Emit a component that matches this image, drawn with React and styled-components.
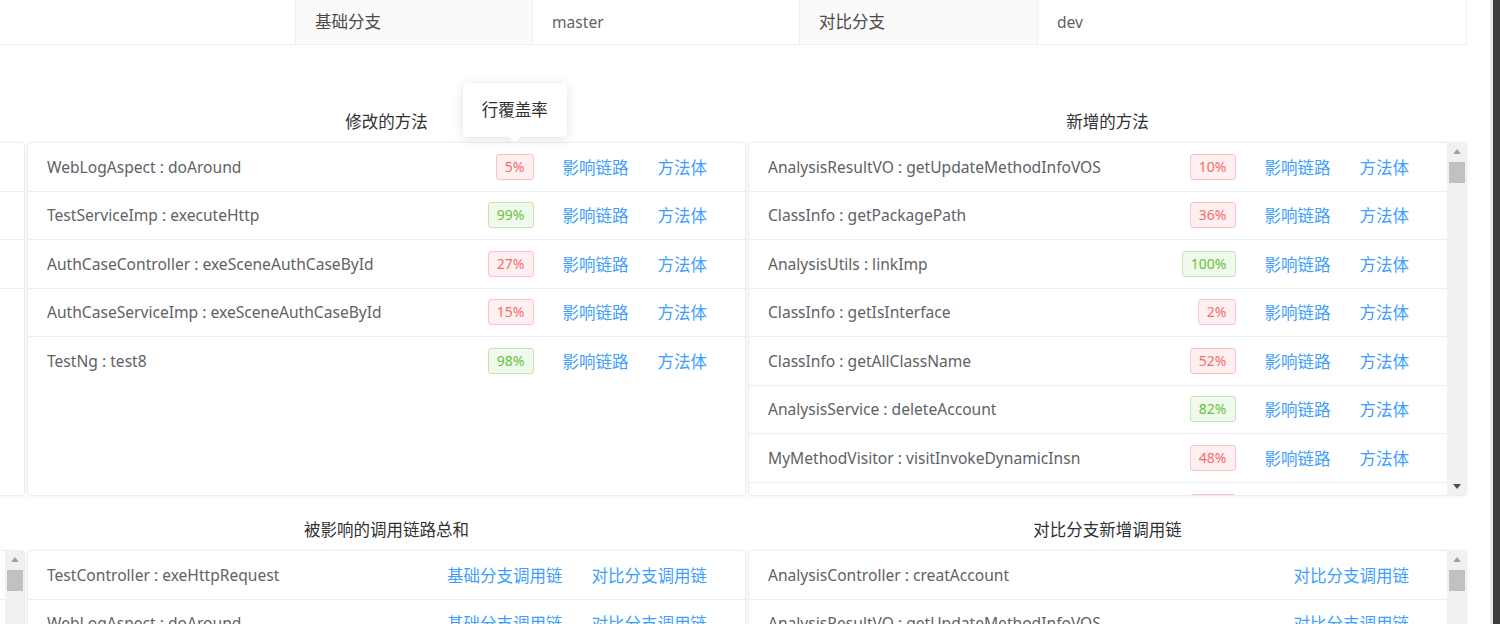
import React from 'react';
import styled, { createGlobalStyle } from 'styled-components';

const GlobalStyle = createGlobalStyle`
  html, body {
    margin: 0;
    padding: 0;
    height: 100%;
    overflow: hidden;
    background: #fff;
  }
  body {
    font-family: "Noto Sans", "Noto Sans CJK SC", sans-serif;
  }
`;

const Frame = styled.div`
  display: flex;
  height: 624px;
`;

const Viewport = styled.div`
  flex: 1;
  min-width: 0;
  overflow: hidden;
`;

const EdgeBar = styled.div`
  width: 7px;
  border-left: 3px solid #e6e6e6;
  background: #3b3b3b;
`;

/* the page is scrolled sideways: the first column lies left of the window */
const Page = styled.div`
  width: 2161px;
  margin-left: -694px;
`;

const DescTable = styled.div`
  display: grid;
  grid-template-columns: 237px 752px 237px 267px 238px 1fr;
  border-bottom: 1px solid #ebeef5;
  border-right: 1px solid #ebeef5;
`;

const DescCell = styled.div`
  box-sizing: border-box;
  height: 44px;
  line-height: 44px;
  padding: 0 19px;
  font-size: ${p => (p.$label ? '16.5px' : '15.6px')};
  color: ${p => (p.$label ? '#4a4a4a' : '#606266')};
  background: ${p => (p.$label ? '#fafafa' : '#fff')};
  border-left: 1px solid #ebeef5;
  white-space: nowrap;
`;

const SectionRow = styled.div`
  display: grid;
  grid-template-columns: repeat(3, 719px);
  column-gap: 2px;
  margin-top: ${p => p.$gap}px;
`;

const Column = styled.div`
  display: flex;
  flex-direction: column;
`;

const Title = styled.div`
  height: 24px;
  text-align: center;
  font-size: 16.5px;
  line-height: 24px;
  color: #303133;
  margin-bottom: 8px;
`;

const Card = styled.div`
  display: flex;
  box-sizing: border-box;
  height: 354px;
  border: 1px solid #ebeef5;
  border-radius: 4px;
  background: #fff;
  box-shadow: 0 1px 4px rgba(0, 0, 0, 0.05);
  overflow: ${p => (p.$open ? 'visible' : 'hidden')};
`;

const List = styled.div`
  flex: 1;
  min-width: 0;
  overflow: ${p => (p.$open ? 'visible' : 'hidden')};
`;

const ScrollBar = styled.div`
  width: 19px;
  flex: none;
  display: flex;
  flex-direction: column;
  background: #f1f1f1;
`;

const ScrollButton = styled.div`
  height: 17px;
  display: flex;
  align-items: center;
  justify-content: center;

  &::before {
    content: '';
    border-left: 4px solid transparent;
    border-right: 4px solid transparent;
    ${p =>
      p.$down
        ? 'border-top: 5px solid #505050;'
        : 'border-bottom: 5px solid #a3a3a3;'}
  }
`;

const ScrollThumb = styled.div`
  height: 21px;
  margin: 2px 1px 0 2px;
  background: #c1c1c1;
`;

const ScrollSpace = styled.div`
  flex: 1;
`;

const Row = styled.div`
  display: flex;
  align-items: center;
  box-sizing: border-box;
  height: 48.5px;
  padding: 0 38px 0 19px;
  border-bottom: 1px solid #ebeef5;
  color: #606266;

  &:last-child {
    border-bottom: none;
  }
`;

const Name = styled.span`
  flex: 1;
  min-width: 0;
  font-size: 15.6px;
  white-space: nowrap;
  overflow: hidden;
  text-overflow: ellipsis;
`;

const Badge = styled.span`
  position: relative;
  box-sizing: border-box;
  height: 26px;
  line-height: 24px;
  padding: 0 8px;
  font-size: 14px;
  border-radius: 3px;
  border: 1px solid ${p => (p.$good ? '#c2e7b0' : '#fbc4c4')};
  background: ${p => (p.$good ? '#f0f9eb' : '#fef0f0')};
  color: ${p => (p.$good ? '#67c23a' : '#f56c6c')};
`;

const Tip = styled.span`
  position: absolute;
  bottom: calc(100% + 18px);
  left: 50%;
  transform: translateX(-50%);
  z-index: 10;
  height: 54px;
  line-height: 54px;
  padding: 0 19px;
  font-size: 16.5px;
  color: #303133;
  background: #fff;
  border-radius: 4px;
  white-space: nowrap;
  box-shadow: 0 2px 12px rgba(0, 0, 0, 0.12);

  &::after {
    content: '';
    position: absolute;
    top: 100%;
    left: 50%;
    margin-left: -6px;
    border-left: 6px solid transparent;
    border-right: 6px solid transparent;
    border-top: 6px solid #fff;
  }
`;

const LinkText = styled.a`
  margin-left: 29px;
  color: #409eff;
  font-size: 16.5px;
  white-space: nowrap;
  cursor: pointer;
`;

const modified = [
  ['WebLogAspect : doAround', 5],
  ['TestServiceImp : executeHttp', 99],
  ['AuthCaseController : exeSceneAuthCaseById', 27],
  ['AuthCaseServiceImp : exeSceneAuthCaseById', 15],
  ['TestNg : test8', 98],
];

const added = [
  ['AnalysisResultVO : getUpdateMethodInfoVOS', 10],
  ['ClassInfo : getPackagePath', 36],
  ['AnalysisUtils : linkImp', 100],
  ['ClassInfo : getIsInterface', 2],
  ['ClassInfo : getAllClassName', 52],
  ['AnalysisService : deleteAccount', 82],
  ['MyMethodVisitor : visitInvokeDynamicInsn', 48],
  ['ClassInfo : getMethodInfos', 40],
];

const chainNames = [
  'TestController : exeHttpRequest',
  'WebLogAspect : doAround',
  'TestServiceImp : executeHttp',
  'AuthCaseController : exeSceneAuthCaseById',
  'AuthCaseServiceImp : exeSceneAuthCaseById',
  'TestNg : test8',
];

const newChainNames = [
  'AnalysisController : creatAccount',
  'AnalysisResultVO : getUpdateMethodInfoVOS',
  'ClassInfo : getPackagePath',
  'AnalysisUtils : linkImp',
  'ClassInfo : getIsInterface',
  'ClassInfo : getAllClassName',
  'AnalysisService : deleteAccount',
  'MyMethodVisitor : visitInvokeDynamicInsn',
];

function FakeScrollBar() {
  return (
    <ScrollBar>
      <ScrollButton />
      <ScrollThumb />
      <ScrollSpace />
      <ScrollButton $down />
    </ScrollBar>
  );
}

function MethodRow({ name, rate, tip }) {
  return (
    <Row>
      <Name>{name}</Name>
      <Badge $good={rate >= 80}>
        {rate}%
        {tip && <Tip>行覆盖率</Tip>}
      </Badge>
      <LinkText>影响链路</LinkText>
      <LinkText>方法体</LinkText>
    </Row>
  );
}

function ChainRow({ name, both }) {
  return (
    <Row>
      <Name>{name}</Name>
      {both && <LinkText>基础分支调用链</LinkText>}
      <LinkText>对比分支调用链</LinkText>
    </Row>
  );
}

export default function App() {
  return (
    <Frame>
      <GlobalStyle />
      <Viewport>
        <Page>
          <DescTable>
            <DescCell $label />
            <DescCell />
            <DescCell $label>基础分支</DescCell>
            <DescCell>master</DescCell>
            <DescCell $label>对比分支</DescCell>
            <DescCell>dev</DescCell>
          </DescTable>

          <SectionRow $gap={65}>
            <Column>
              <Title />
              <Card>
                <List>
                  {[0, 1, 2, 3].map(i => (
                    <Row key={i} />
                  ))}
                </List>
              </Card>
            </Column>
            <Column>
              <Title>修改的方法</Title>
              <Card $open>
                <List $open>
                  {modified.map(([n, r], i) => (
                    <MethodRow key={i} name={n} rate={r} tip={i === 0} />
                  ))}
                </List>
              </Card>
            </Column>
            <Column>
              <Title>新增的方法</Title>
              <Card>
                <List>
                  {added.map(([n, r], i) => (
                    <MethodRow key={i} name={n} rate={r} />
                  ))}
                </List>
                <FakeScrollBar />
              </Card>
            </Column>
          </SectionRow>

          <SectionRow $gap={22}>
            <Column>
              <Title />
              <Card>
                <List>
                  {[0, 1, 2, 3, 4, 5, 6, 7].map(i => (
                    <Row key={i} />
                  ))}
                </List>
                <FakeScrollBar />
              </Card>
            </Column>
            <Column>
              <Title>被影响的调用链路总和</Title>
              <Card>
                <List>
                  {chainNames.map((n, i) => (
                    <ChainRow key={i} name={n} both />
                  ))}
                </List>
              </Card>
            </Column>
            <Column>
              <Title>对比分支新增调用链</Title>
              <Card>
                <List>
                  {newChainNames.map((n, i) => (
                    <ChainRow key={i} name={n} />
                  ))}
                </List>
                <FakeScrollBar />
              </Card>
            </Column>
          </SectionRow>
        </Page>
      </Viewport>
      <EdgeBar />
    </Frame>
  );
}
